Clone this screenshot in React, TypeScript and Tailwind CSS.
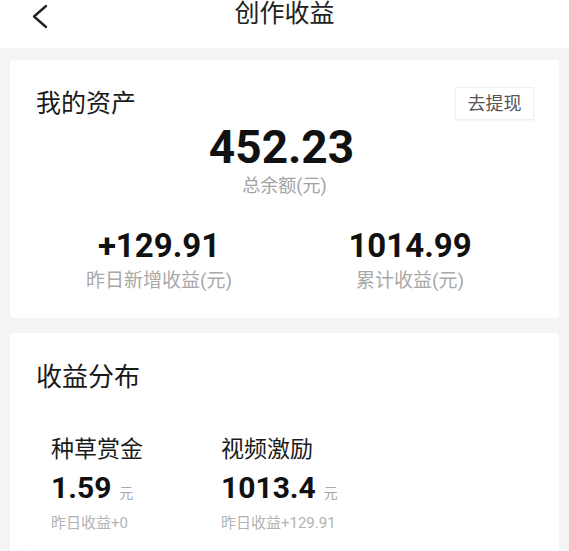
export default function App() {
  const subs = [
    { name: "种草赏金", value: "1.59", yesterday: "昨日收益+0" },
    { name: "视频激励", value: "1013.4", yesterday: "昨日收益+129.91" },
  ];
  return (
    <div className="w-[569px] h-[551px] overflow-hidden bg-[#f4f4f4] font-['Roboto','Noto_Sans_CJK_SC',sans-serif]">
      {/* header */}
      <div className="relative h-[48px] bg-white">
        <svg className="absolute left-[31px] top-[4px]" width="18" height="25" viewBox="0 0 18 25">
          <path d="M15 2 L3 12.5 L15 23" fill="none" stroke="#222" strokeWidth="2.4" strokeLinecap="round" strokeLinejoin="round" />
        </svg>
        <div className="text-center text-[25px] leading-[28px] text-[#222]">创作收益</div>
      </div>

      {/* my assets */}
      <div className="mx-[10px] mt-[12px] rounded bg-white pt-[27px] pb-[28px]">
        <div className="flex items-center justify-between pl-[26px] pr-[25px]">
          <div className="text-[25px] leading-none text-[#1a1a1a]">我的资产</div>
          <div className="flex h-[33px] w-[79px] items-center justify-center border border-[#efefef] shadow-[0_1px_2px_rgba(0,0,0,0.05)] text-[18px] text-[#555]">
            去提现
          </div>
        </div>
        <div className="mt-[4px] pr-[6px] text-center text-[46px] font-bold leading-none text-[#111]">452.23</div>
        <div className="mt-[7px] text-center text-[18px] leading-none text-[#a3a3a3]">总余额(元)</div>
        <div className="mt-[34px] ml-[11px] flex">
          <div className="w-[276px] flex flex-col items-center">
            <div className="text-[33px] font-bold leading-none text-[#111]">+129.91</div>
            <div className="mt-[9px] text-[19px] leading-none text-[#a8a8a8]">昨日新增收益(元)</div>
          </div>
          <div className="w-[226px] flex flex-col items-center">
            <div className="text-[33px] font-bold leading-none text-[#111]">1014.99</div>
            <div className="mt-[9px] text-[19px] leading-none text-[#a8a8a8]">累计收益(元)</div>
          </div>
        </div>
      </div>

      {/* distribution */}
      <div className="mx-[10px] mt-[15px] rounded bg-white pt-[31px] pb-[10px]">
        <div className="pl-[26px] text-[26px] leading-none text-[#1a1a1a]">收益分布</div>
        <div className="mt-[30px] ml-[22px] flex gap-[6px]">
          {subs.map((s) => (
            <div key={s.name} className="w-[164px] pl-[19px] pt-[18px] pb-[18px] rounded shadow-[0_0_3px_rgba(0,0,0,0.035)]">
              <div className="text-[23px] leading-none text-[#1a1a1a]">{s.name}</div>
              <div className="mt-[12px] flex items-baseline">
                <span className="text-[30px] font-bold leading-none text-[#111]">{s.value}</span>
                <span className="ml-[8px] text-[14px] leading-none text-[#a8a8a8]">元</span>
              </div>
              <div className="mt-[13px] text-[15px] leading-none text-[#b3b3b3]">{s.yesterday}</div>
            </div>
          ))}
        </div>
      </div>
    </div>
  );
}
